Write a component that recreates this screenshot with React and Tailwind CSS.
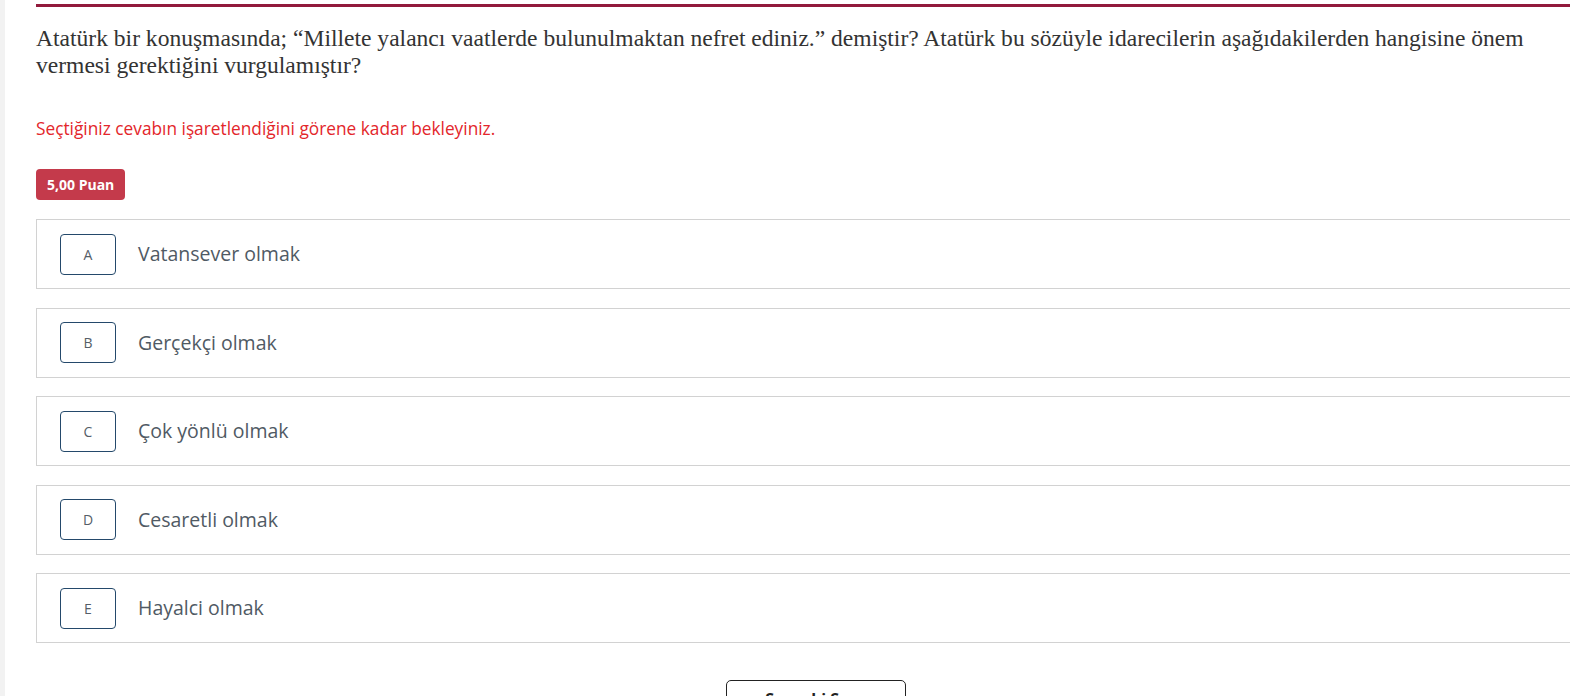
import React from "react";

const options = [
  { l: "A", t: "Vatansever olmak" },
  { l: "B", t: "Gerçekçi olmak" },
  { l: "C", t: "Çok yönlü olmak" },
  { l: "D", t: "Cesaretli olmak" },
  { l: "E", t: "Hayalci olmak" },
];

export default function App() {
  return (
    <div className="w-[1570px] h-[696px] overflow-hidden bg-white flex">
      <div className="w-[5px] shrink-0 bg-[#f2f2f2]" />
      <div className="pl-[31px] pt-[4px] w-[1600px] shrink-0">
        <div className="h-[3px] bg-[#921a3c]" />
        <div
          className="mt-[18px] w-[1520px] text-[23.55px] leading-[27px] text-[#333]"
          style={{ fontFamily: '"Liberation Serif", "Times New Roman", serif' }}
        >
          Atatürk bir konuşmasında; “Millete yalancı vaatlerde bulunulmaktan nefret ediniz.” demiştir? Atatürk bu sözüyle idarecilerin aşağıdakilerden hangisine önem vermesi gerektiğini vurgulamıştır?
        </div>
        <div style={{ fontFamily: '"Open Sans", Lato, sans-serif' }}>
          <p className="mt-[39px] text-[17.3px] leading-[22px] text-[#e3262b]">
            Seçtiğiniz cevabın işaretlendiğini görene kadar bekleyiniz.
          </p>
          <div className="mt-[29px] inline-flex items-center h-[31px] px-[11px] rounded-[4px] bg-[#c43a4b] text-white text-[14px] font-bold">
            5,00 Puan
          </div>
          <div className="mt-[19px] flex flex-col gap-[18.5px]">
            {options.map((o) => (
              <div
                key={o.l}
                className="h-[70px] border border-[#d2d2d2] flex items-center pl-[23px]"
              >
                <div className="w-[56px] h-[41px] border border-[#24496b] rounded-[4px] flex items-center justify-center text-[14px] text-[#555e68]">
                  {o.l}
                </div>
                <span className="ml-[22px] text-[19.5px] text-[#505a64]">{o.t}</span>
              </div>
            ))}
          </div>
          <div className="mt-[37px] pl-[690px]">
            <button className="w-[180px] h-[40px] pt-[8px] border border-[#222] rounded-[5px] text-[16px] font-bold text-[#222] leading-[20px] flex justify-center">
              Sonraki Soru
            </button>
          </div>
        </div>
      </div>
    </div>
  );
}
